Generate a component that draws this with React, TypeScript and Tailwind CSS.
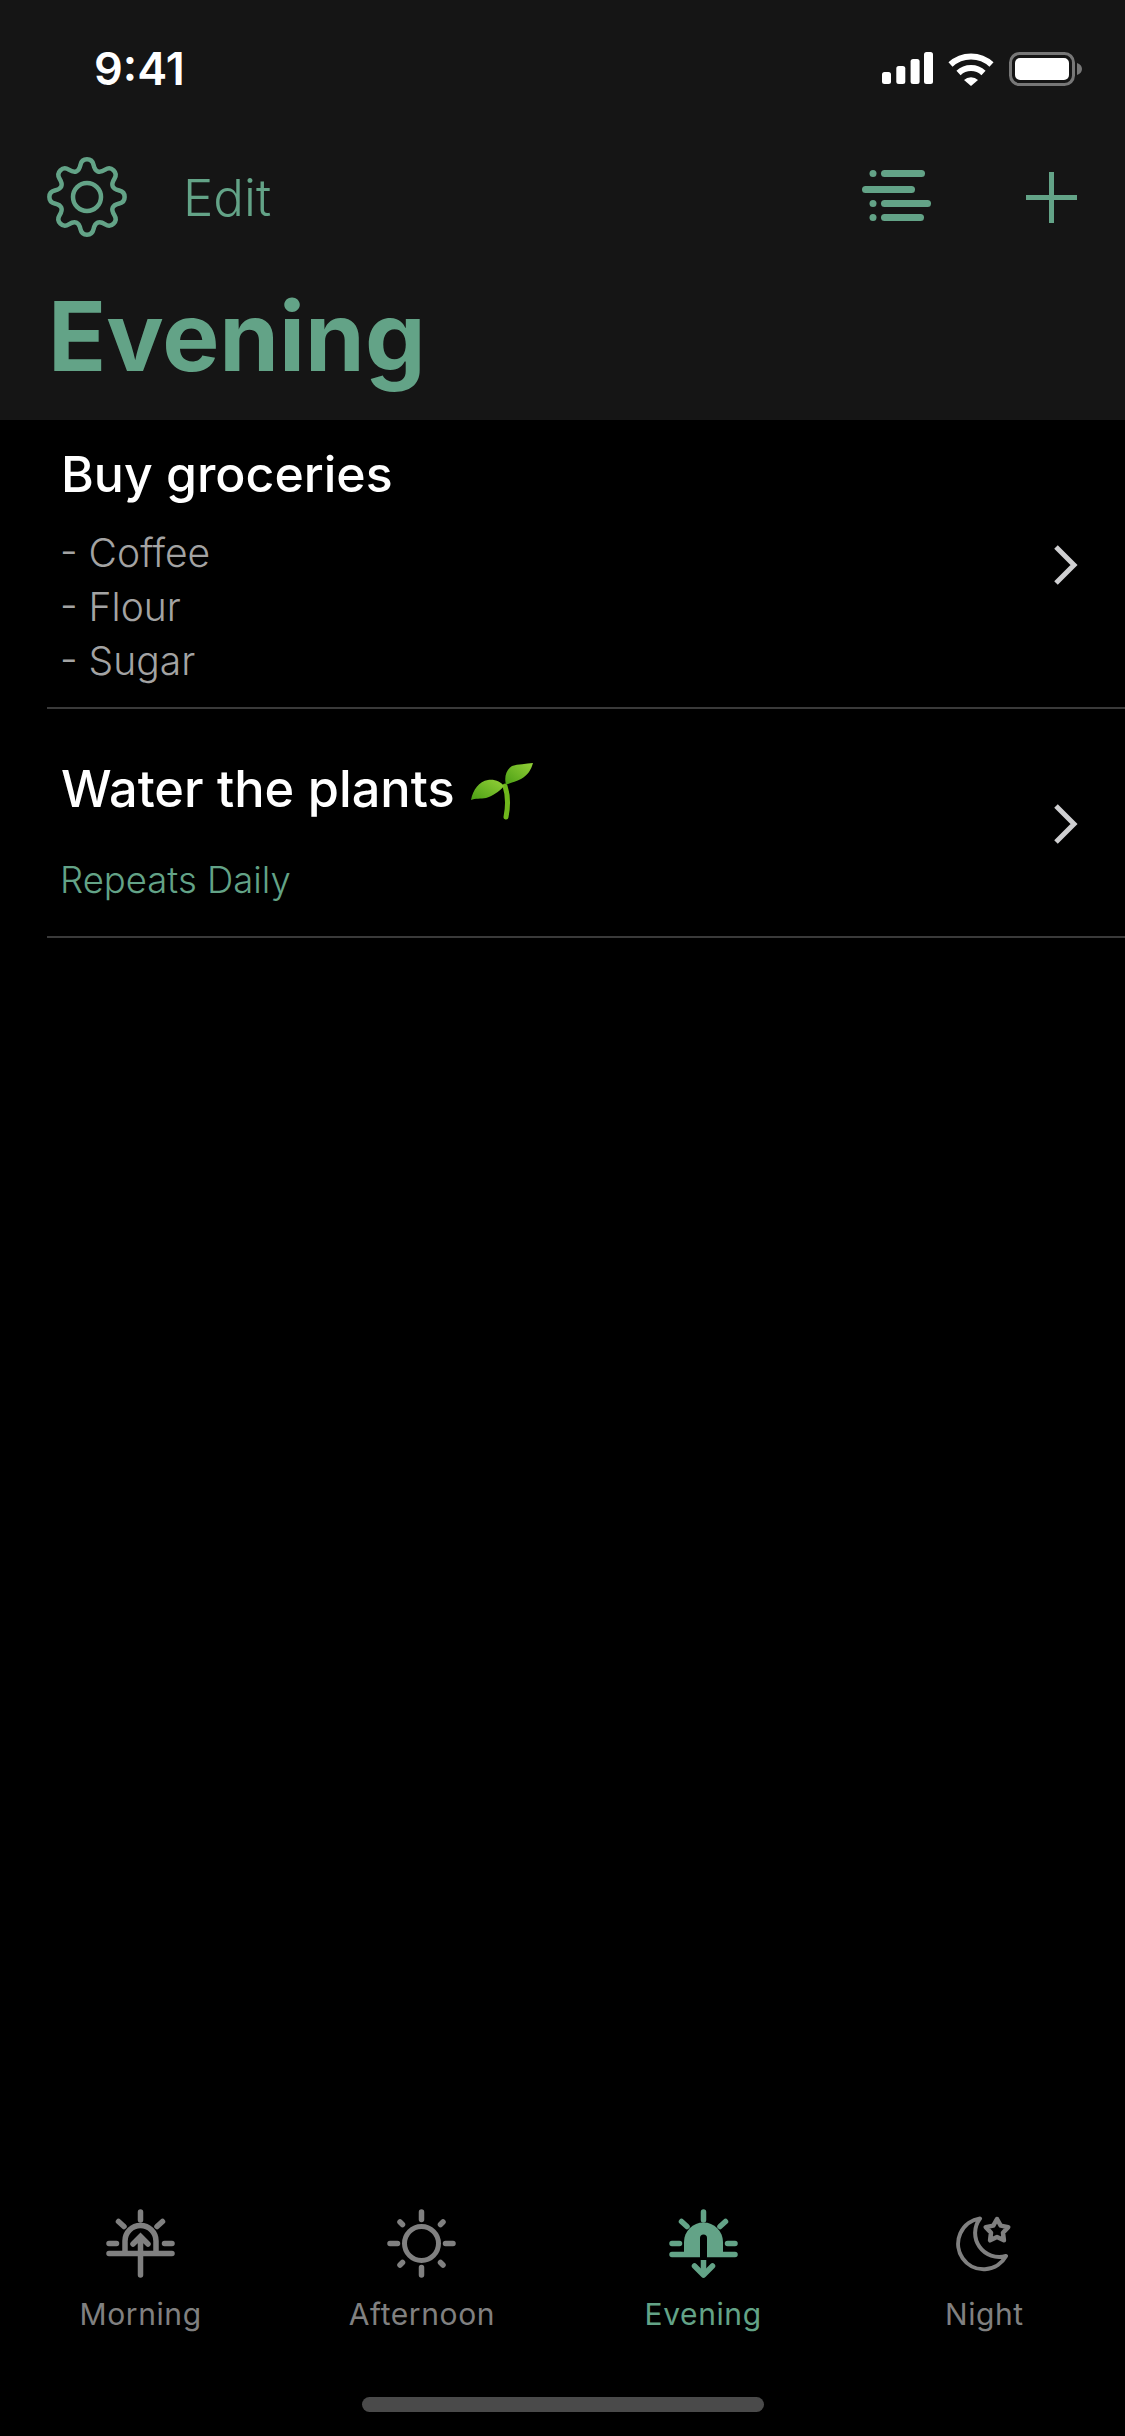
const GREEN = "#63a387";
const GRAY = "#808080";

function gearPath() {
  const cx = 41, cy = 41, ri = 28, ro = 38;
  const ctrl: [number, number][] = [];
  for (let i = 0; i < 8; i++) {
    const a = -90 + i * 45;
    for (const [d, r] of [[-16, ri], [-8, ro], [8, ro], [16, ri]] as const) {
      const t = ((a + d) * Math.PI) / 180;
      ctrl.push([cx + r * Math.cos(t), cy + r * Math.sin(t)]);
    }
  }
  const mid = (p: [number, number], q: [number, number]) => [(p[0] + q[0]) / 2, (p[1] + q[1]) / 2];
  const n = ctrl.length;
  const s = mid(ctrl[n - 1], ctrl[0]);
  let d = `M${s[0].toFixed(2)} ${s[1].toFixed(2)}`;
  for (let i = 0; i < n; i++) {
    const m = mid(ctrl[i], ctrl[(i + 1) % n]);
    d += `Q${ctrl[i][0].toFixed(2)} ${ctrl[i][1].toFixed(2)} ${m[0].toFixed(2)} ${m[1].toFixed(2)}`;
  }
  return d + "Z";
}

function Gear() {
  return (
    <svg width="82" height="82" viewBox="0 0 82 82" fill="none" stroke={GREEN} strokeWidth="4.5" strokeLinejoin="round">
      <path d={gearPath()} />
      <circle cx="41" cy="41" r="14" />
    </svg>
  );
}

function Signal() {
  return (
    <svg width="51" height="32" viewBox="0 0 51 32" fill="#fff">
      <rect x="0" y="20" width="9" height="12" rx="2.5" />
      <rect x="14.3" y="14" width="9" height="18" rx="2.5" />
      <rect x="28.6" y="7" width="9" height="25" rx="2.5" />
      <rect x="42" y="0" width="9" height="32" rx="2.5" />
    </svg>
  );
}

function Wifi() {
  return (
    <svg width="46" height="34" viewBox="0 0 46 34" fill="none" stroke="#fff" strokeWidth="6">
      <path d="M2.5 12.5 A30 30 0 0 1 43.5 12.5" />
      <path d="M10.5 21 A18 18 0 0 1 35.5 21" />
      <path d="M16 28 L23 34 L30 28 A10 10 0 0 0 16 28Z" fill="#fff" stroke="none" />
    </svg>
  );
}

function Battery() {
  return (
    <svg width="73" height="34" viewBox="0 0 73 34" fill="none">
      <rect x="1.5" y="1.5" width="63" height="31" rx="9" stroke="#777" strokeWidth="3" />
      <rect x="6" y="6" width="54" height="22" rx="5" fill="#fff" />
      <path d="M68 11 C71 12 73 14 73 17 C73 20 71 22 68 23 Z" fill="#777" />
    </svg>
  );
}

function FilterIcon() {
  return (
    <svg width="70" height="54" viewBox="0 0 70 54" fill={GREEN}>
      <circle cx="11" cy="3.5" r="3.5" />
      <rect x="19" y="0" width="44" height="7" rx="3.5" />
      <rect x="0" y="16" width="53" height="7" rx="3.5" />
      <circle cx="11" cy="33.5" r="3.5" />
      <rect x="19" y="30" width="50" height="7" rx="3.5" />
      <circle cx="11" cy="47.5" r="3.5" />
      <rect x="19" y="44" width="43" height="7" rx="3.5" />
    </svg>
  );
}

function Plus() {
  return (
    <svg width="51" height="51" viewBox="0 0 51 51" fill={GREEN}>
      <rect x="23" y="0" width="5" height="51" />
      <rect x="0" y="23" width="51" height="5" />
    </svg>
  );
}

function Chevron() {
  return (
    <svg width="24" height="40" viewBox="0 0 24 40" fill="none" stroke="#cfcfd1" strokeWidth="5">
      <path d="M2 2 L20 20 L2 38" />
    </svg>
  );
}

function Sprout() {
  return (
    <svg width="62" height="57" viewBox="0 0 62 57" className="ml-[16px] mt-[5px] shrink-0">
      <defs>
        <linearGradient id="leaf" x1="0" y1="1" x2="1" y2="0">
          <stop offset="0" stopColor="#4a9e14" />
          <stop offset="1" stopColor="#93d038" />
        </linearGradient>
      </defs>
      <path d="M35 54 C37 44 37 32 34 23" fill="none" stroke="#6fb61c" strokeWidth="5" strokeLinecap="round" />
      <path d="M0 37 C2 27 8 18 17 17 C24 16 30 19 33 23 C28 29 21 33 15 35 C10 36 4 35 0 37Z" fill="url(#leaf)" />
      <path d="M35 22 C33 14 35 7 41 3 C47 1 55 1 62 0 C60 7 57 12 50 16 C45 19 40 19 35 22Z" fill="url(#leaf)" />
    </svg>
  );
}

function MorningIcon() {
  return (
    <svg width="69" height="69" viewBox="0 0 69 69" fill="none" stroke={GRAY} strokeWidth="5.5" strokeLinecap="round">
      <path d="M19 44 V32 A15.5 15.5 0 0 1 50 32 V44" strokeLinecap="butt" />
      <path d="M34.5 44 V28 M25 36 L34.5 26.5 L44 36" stroke="#000" strokeWidth="9" strokeLinecap="butt" />
      <path d="M34.5 3 V11 M12.5 12.5 L18 17.5 M56.5 12.5 L51 17.5 M3 34.5 H10.5 M58.5 34.5 H66 M3 44.5 H66" />
      <path d="M34.5 66 V28 M27 35 L34.5 27.5 L42 35" />
    </svg>
  );
}

function EveningIcon() {
  return (
    <svg width="69" height="69" viewBox="0 0 69 69" fill="none" stroke={GREEN} strokeWidth="5.5" strokeLinecap="round">
      <path d="M34.5 3 V11 M12.5 12.5 L18 17.5 M56.5 12.5 L51 17.5 M3 34.5 H10.5 M58.5 34.5 H66 M3 45.5 H66" />
      <path d="M15 43 V33 A19.5 19.5 0 0 1 54 33 V43 Z" fill={GREEN} stroke="none" />
      <path d="M34.5 29 V48" stroke="#000" strokeWidth="7" />
      <path d="M34.5 51 V63" strokeLinecap="butt" />
      <path d="M25.5 57 L34.5 66 L43.5 57" strokeLinejoin="round" strokeLinecap="round" />
    </svg>
  );
}

function AfternoonIcon() {
  return (
    <svg width="69" height="69" viewBox="0 0 69 69" fill="none" stroke={GRAY} strokeWidth="5.5" strokeLinecap="round">
      <circle cx="34.5" cy="34.5" r="17" strokeWidth="5" />
      <path d="M34.5 3 V10.5 M34.5 58.5 V66 M3 34.5 H10.5 M58.5 34.5 H66 M13 13 L15.5 15.5 M56 13 L53.5 15.5 M13 56 L15.5 53.5 M56 56 L53.5 53.5" />
    </svg>
  );
}

function NightIcon() {
  return (
    <svg width="56" height="56" viewBox="0 0 56 56" fill="none" stroke={GRAY} strokeWidth="4" strokeLinejoin="round">
      <path d="M24 2.5 A25.5 25.5 0 1 0 50 40 A24 24 0 0 1 24 2.5Z" />
      <path d="M41 3 L44.7 9.6 L52.2 11.1 L47 16.7 L47.9 24.3 L41 21 L34.1 24.3 L35 16.7 L29.8 11.1 L37.3 9.6Z" strokeWidth="4.5" />
    </svg>
  );
}

const tabs = [
  { label: "Morning", icon: <MorningIcon />, active: false },
  { label: "Afternoon", icon: <AfternoonIcon />, active: false },
  { label: "Evening", icon: <EveningIcon />, active: true },
  { label: "Night", icon: <NightIcon />, active: false },
];

export default function App() {
  return (
    <div className="flex h-[2436px] w-[1125px] flex-col bg-black font-['Inter','Liberation_Sans',sans-serif]">
      <header className="h-[420px] shrink-0 bg-[#151515]">
        <div className="flex h-[136px] items-start justify-between pl-[94px] pr-[43px] pt-[44px]">
          <span className="text-[45px] leading-[50px] font-semibold text-white">9:41</span>
          <div className="flex items-start gap-[15px] pt-[8px]">
            <Signal />
            <Wifi />
            <Battery />
          </div>
        </div>
        <div className="flex h-[120px] items-center pl-[46px] pr-[48px] mt-[1px]">
          <Gear />
          <span className="ml-[55px] text-[51px] leading-none font-light text-[#63a387]">Edit</span>
          <div className="ml-auto flex items-center gap-[94px]">
            <FilterIcon />
            <Plus />
          </div>
        </div>
        <h1 className="mt-[19px] pl-[48px] text-[96px] leading-[120px] font-bold text-[#63a387]">Evening</h1>
      </header>

      <div className="ml-[47px] flex h-[289px] items-center border-b-2 border-[#3a3a3a]">
        <div className="flex-1 pl-[14px] pt-[4px]">
          <div className="text-[50px] leading-[60px] font-medium text-white">Buy groceries</div>
          <div className="mt-[22px] -ml-[1px] text-[39px] leading-[54px] font-light text-[#a3a3a3]">
            <div>- Coffee</div>
            <div>- Flour</div>
            <div>- Sugar</div>
          </div>
        </div>
        <div className="mr-[47px] pt-[3px]">
          <Chevron />
        </div>
      </div>

      <div className="ml-[47px] flex h-[229px] items-center border-b-2 border-[#3a3a3a]">
        <div className="flex-1 pl-[14px] pt-[14px]">
          <div className="flex items-center text-[50.5px] leading-[60px] font-medium text-white">
            <span>Water the plants</span>
            <Sprout />
          </div>
          <div className="mt-[38px] -ml-[1px] text-[36.5px] leading-[44px] font-light text-[#63a387]">Repeats Daily</div>
        </div>
        <div className="mr-[47px] pt-[3px]">
          <Chevron />
        </div>
      </div>

      <div className="flex-1" />

      <nav className="grid h-[188px] shrink-0 grid-cols-4">
        {tabs.map((t) => (
          <div key={t.label} className="flex flex-col items-center">
            <div className="flex h-[69px] items-center justify-center">{t.icon}</div>
            <span className={`mt-[18px] text-[30px] leading-[36px] tracking-[0.6px] ${t.active ? "text-[#63a387]" : "text-[#808080]"}`}>
              {t.label}
            </span>
          </div>
        ))}
      </nav>
      <div className="flex h-[39px] shrink-0 justify-center">
        <div className="h-[15px] w-[402px] rounded-full bg-[#4a4a4a]" />
      </div>
    </div>
  );
}
